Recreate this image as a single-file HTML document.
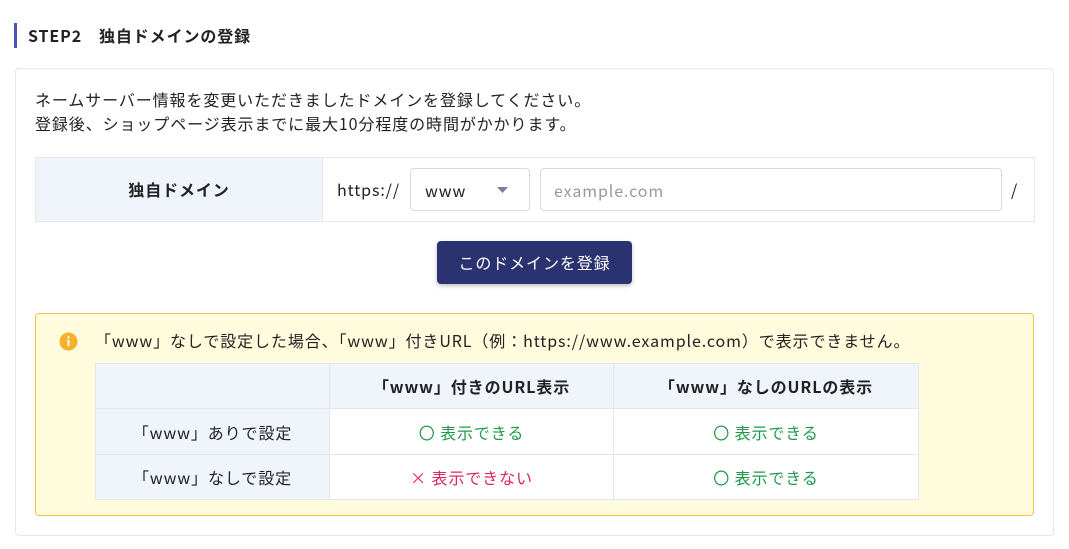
<!DOCTYPE html>
<html><head><meta charset="utf-8"><style>
body{margin:0;background:#fff;font-family:"Noto Sans CJK JP","Liberation Sans",sans-serif;color:#222;font-size:16px;letter-spacing:0.9px;width:1069px;height:549px;overflow:hidden;position:relative}
.a{position:absolute;white-space:nowrap}
h2{position:absolute;left:14px;top:23px;margin:0;height:25px;border-left:3px solid #4a57b5;padding-left:11px;font-size:16px;font-weight:bold;line-height:25px;color:#222}
.card{left:15px;top:68px;width:1037px;height:466px;border:1px solid #e4e7ee;border-radius:4px}
.p{left:35px;top:87px;line-height:24px;font-size:16px}
.row{left:35px;top:157px;width:998px;height:63px;border:1px solid #e4e7ee}
.lab{left:0;top:0;width:286px;height:63px;background:#f0f4fb;border-right:1px solid #e4e7ee;text-align:center;line-height:63px;font-weight:bold}
.sel{left:410px;top:168px;width:118px;height:41px;border:1px solid #d5d9e2;border-radius:4px}
.inp{left:540px;top:168px;width:460px;height:41px;border:1px solid #d5d9e2;border-radius:4px}
.btn{left:437px;top:241px;width:195px;height:43px;background:#2b3270;border-radius:4px;color:#fff;text-align:center;line-height:43px;box-shadow:0 2px 4px rgba(0,0,0,.25)}
.note{left:35px;top:313px;width:997px;height:201px;background:#fffbdd;border:1px solid #f3c34f;border-radius:4px}
table{position:absolute;left:95px;top:363px;border-collapse:collapse;font-size:16px}
td{border:1px solid #e1e5ee;height:44px;text-align:center;padding:0;line-height:20px}
.h{background:#f0f4fb}
.g{color:#1e9a48}.r{color:#e0245e}
.l{line-height:24px}
</style></head><body>
<h2>STEP2　独自ドメインの登録</h2>
<div class="a card"></div>
<div class="a p">ネームサーバー情報を変更いただきましたドメインを登録してください。<br>登録後、ショップページ表示までに最大10分程度の時間がかかります。</div>
<div class="a row"><div class="a lab">独自ドメイン</div></div>
<div class="a l" style="left:337px;top:177px">https://</div>
<div class="a sel"><span class="a l" style="left:14px;top:9px">www</span><svg class="a" style="left:86px;top:18px" width="11" height="6"><path d="M0 0h11L5.5 6z" fill="#7a80a0"/></svg></div>
<div class="a inp"><span class="a l" style="left:13px;top:9px;color:#999">example.com</span></div>
<div class="a l" style="left:1011px;top:177px">/</div>
<div class="a btn">このドメインを登録</div>
<div class="a note"></div>
<svg class="a" style="left:59px;top:332px" width="19" height="19"><circle cx="9.5" cy="9.5" r="9" fill="#f6b12c"/><rect x="8.5" y="8" width="2" height="6" fill="#fff"/><circle cx="9.5" cy="5.5" r="1.2" fill="#fff"/></svg>
<div class="a l" style="left:95px;top:328px">「www」なしで設定した場合、「www」付きURL（例：https://www.example.com）で表示できません。</div>
<table>
<tr><td class="h" style="width:233px"></td><td class="h" style="width:283px;font-weight:bold">「www」付きのURL表示</td><td class="h" style="width:304px;font-weight:bold">「www」なしのURLの表示</td></tr>
<tr><td class="h" style="height:45px">「www」ありで設定</td><td class="g" style="background:#fff">〇 表示できる</td><td class="g" style="background:#fff">〇 表示できる</td></tr>
<tr><td class="h" style="height:44px">「www」なしで設定</td><td class="r" style="background:#fff">× 表示できない</td><td class="g" style="background:#fff">〇 表示できる</td></tr>
</table>
</body></html>
